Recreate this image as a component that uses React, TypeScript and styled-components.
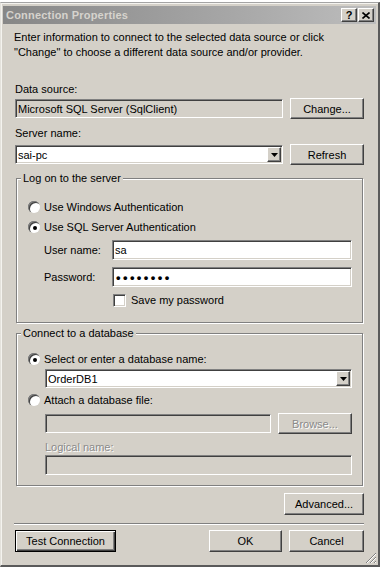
import React from 'react';
import styled, { createGlobalStyle } from 'styled-components';

const GlobalStyle = createGlobalStyle`
  html, body {
    margin: 0;
    padding: 0;
    background: #ffffff;
  }
  body {
    font-family: 'Liberation Sans', Arial, sans-serif;
    font-size: 11px;
    color: #000000;
  }
  * {
    box-sizing: border-box;
  }
`;

// window frame
const Window = styled.div`
  position: relative;
  width: 380px;
  height: 565px;
  margin-top: 2px;
  display: flex;
  flex-direction: column;
  background: #d4d0c8;
  border-top: 1px solid #a4a4a4;
  border-left: 1px solid #e4e2dc;
  border-right: 2px solid #5a5a5a;
  border-bottom: 2px solid #5a5a5a;
  box-shadow: inset 1px 1px 0 #f4f3ef;
`;

const TitleBar = styled.div`
  height: 18px;
  margin: 3px 2px 0 2px;
  padding: 0 2px 0 3px;
  display: flex;
  align-items: center;
  background: linear-gradient(90deg, #878787 0%, #a6a6a6 60%, #bdbdbd 100%);
`;

const TitleText = styled.span`
  flex: 1;
  font-weight: bold;
  font-size: 11px;
  color: #d6d3cd;
  letter-spacing: 0.2px;
`;

const CaptionButton = styled.div<{ $gap?: number }>`
  width: 16px;
  height: 14px;
  margin-left: ${(p) => p.$gap ?? 0}px;
  display: flex;
  align-items: center;
  justify-content: center;
  background: #d4d0c8;
  border: 1px solid;
  border-color: #ffffff #404040 #404040 #ffffff;
  box-shadow: inset -1px -1px 0 #808080;
  font-weight: bold;
  font-size: 11px;
  line-height: 12px;
`;

const Body = styled.div`
  flex: 1;
  display: flex;
  flex-direction: column;
  padding: 6px 14px 0 14px;
`;

const Intro = styled.p`
  margin: 0 0 0 -1px;
  line-height: 15px;
`;

const FieldLabel = styled.div<{ $top: number; $indent?: number; $disabled?: boolean }>`
  margin-top: ${(p) => p.$top}px;
  margin-left: ${(p) => p.$indent ?? 0}px;
  line-height: 14px;
  height: 14px;
  color: ${(p) => (p.$disabled ? '#8a8a8a' : '#000000')};
  text-shadow: ${(p) => (p.$disabled ? '1px 1px 0 #ffffff' : 'none')};
`;

const Row = styled.div<{ $top: number; $indent?: number; $height?: number }>`
  margin-top: ${(p) => p.$top}px;
  margin-left: ${(p) => p.$indent ?? 0}px;
  height: ${(p) => p.$height ?? 21}px;
  display: flex;
  align-items: center;
  gap: 7px;
`;

const TextBox = styled.div<{ $height?: number; $bg?: string }>`
  flex: 1;
  height: ${(p) => p.$height ?? 19}px;
  display: flex;
  align-items: center;
  padding: 0 1px 0 2px;
  background: ${(p) => p.$bg ?? '#ffffff'};
  border: 1px solid;
  border-color: #808080 #ffffff #ffffff #808080;
  box-shadow: inset 1px 1px 0 #404040, inset -1px -1px 0 #d4d0c8;
  white-space: nowrap;
  overflow: hidden;
`;

const BoxText = styled.span`
  flex: 1;
`;

const PasswordDots = styled.span`
  flex: 1;
  font-size: 13px;
  font-weight: bold;
  letter-spacing: 2.4px;
  margin-left: 1px;
`;

const DropButton = styled.div`
  width: 14px;
  height: 15px;
  display: flex;
  align-items: center;
  justify-content: center;
  background: #d4d0c8;
  border: 1px solid;
  border-color: #ffffff #404040 #404040 #ffffff;
  box-shadow: inset -1px -1px 0 #808080;
`;

const Button = styled.div<{ $width: number; $height?: number; $primary?: boolean; $disabled?: boolean }>`
  width: ${(p) => p.$width}px;
  height: ${(p) => p.$height ?? 22}px;
  flex: none;
  display: flex;
  align-items: center;
  justify-content: center;
  background: #d4d0c8;
  border: 1px solid;
  border-color: ${(p) => (p.$primary ? '#000000' : '#ffffff #404040 #404040 #ffffff')};
  box-shadow: ${(p) =>
    p.$primary
      ? 'inset 1px 1px 0 #ffffff, inset -1px -1px 0 #404040, inset -2px -2px 0 #808080'
      : 'inset -1px -1px 0 #808080'};
  color: ${(p) => (p.$disabled ? '#8a8a8a' : '#000000')};
  text-shadow: ${(p) => (p.$disabled ? '1px 1px 0 #ffffff' : 'none')};
`;

const Group = styled.fieldset<{ $top: number }>`
  margin: ${(p) => p.$top}px 1px 0 1px;
  padding: 0;
  min-width: 0;
  border: 1px solid #808080;
  box-shadow: inset 1px 1px 0 #ffffff, 1px 1px 0 #ffffff;
`;

const Legend = styled.legend`
  margin-left: 4px;
  padding: 0 2px;
  line-height: 14px;
  background: #d4d0c8;
`;

const GroupBody = styled.div<{ $bottom: number }>`
  display: flex;
  flex-direction: column;
  padding: 0 10px ${(p) => p.$bottom}px 11px;
`;

const OptionRow = styled.div<{ $top: number; $indent?: number }>`
  margin-top: ${(p) => p.$top}px;
  margin-left: ${(p) => p.$indent ?? 0}px;
  height: 14px;
  display: flex;
  align-items: center;
  gap: 4px;
`;

const RadioCircle = styled.span<{ $checked?: boolean }>`
  width: 12px;
  height: 12px;
  flex: none;
  display: flex;
  align-items: center;
  justify-content: center;
  border-radius: 50%;
  background: #ffffff;
  box-shadow: inset 1px 1px 0 #808080, inset 2px 2px 0 #404040;

  &::after {
    content: '';
    width: 4px;
    height: 4px;
    border-radius: 50%;
    background: #000000;
    display: ${(p) => (p.$checked ? 'block' : 'none')};
    margin: 1px 0 0 1px;
  }
`;

const CheckBox = styled.span`
  width: 13px;
  height: 13px;
  flex: none;
  margin-right: 1px;
  background: #ffffff;
  border: 1px solid;
  border-color: #808080 #ffffff #ffffff #808080;
  box-shadow: inset 1px 1px 0 #404040, inset -1px -1px 0 #d4d0c8;
`;

const CredLabel = styled.span`
  width: 61px;
  flex: none;
`;

const Separator = styled.div`
  margin: 8px 0 0 -1px;
  height: 2px;
  border-top: 1px solid #808080;
  border-bottom: 1px solid #ffffff;
`;

const ButtonRow = styled.div<{ $top: number; $end?: boolean }>`
  margin-top: ${(p) => p.$top}px;
  display: flex;
  align-items: center;
  justify-content: ${(p) => (p.$end ? 'flex-end' : 'flex-start')};
  gap: 7px;
`;

const Spacer = styled.div`
  flex: 1;
`;

const Grip = styled.svg`
  position: absolute;
  right: 1px;
  bottom: 1px;
`;

const ComboBox = ({ value }: { value: string }) => (
  <TextBox>
    <BoxText>{value}</BoxText>
    <DropButton>
      <svg width="7" height="4" viewBox="0 0 7 4">
        <polygon points="0,0 7,0 3.5,4" fill="#000" />
      </svg>
    </DropButton>
  </TextBox>
);

const App = () => {
  return (
    <>
      <GlobalStyle />
      <Window>
        <TitleBar>
          <TitleText>Connection Properties</TitleText>
          <CaptionButton>?</CaptionButton>
          <CaptionButton $gap={1}>
            <svg width="8" height="7" viewBox="0 0 8 7">
              <path d="M0.5 0.5 L7.5 6.5 M7.5 0.5 L0.5 6.5" stroke="#000" strokeWidth="1.6" />
            </svg>
          </CaptionButton>
        </TitleBar>

        <Body>
          <Intro>
            Enter information to connect to the selected data source or click
            <br />
            "Change" to choose a different data source and/or provider.
          </Intro>

          <FieldLabel $top={22}>Data source:</FieldLabel>
          <Row $top={2}>
            <TextBox $bg="#d4d0c8">
              <BoxText>Microsoft SQL Server (SqlClient)</BoxText>
            </TextBox>
            <Button $width={74} $height={21}>Change...</Button>
          </Row>

          <FieldLabel $top={7}>Server name:</FieldLabel>
          <Row $top={4}>
            <ComboBox value="sai-pc" />
            <Button $width={74} $height={21}>Refresh</Button>
          </Row>

          <Group $top={6}>
            <Legend>Log on to the server</Legend>
            <GroupBody $bottom={15}>
              <OptionRow $top={15}>
                <RadioCircle />
                <span>Use Windows Authentication</span>
              </OptionRow>
              <OptionRow $top={6}>
                <RadioCircle $checked />
                <span>Use SQL Server Authentication</span>
              </OptionRow>
              <Row $top={6} $indent={16} $height={20}>
                <CredLabel>User name:</CredLabel>
                <TextBox $height={20}>
                  <BoxText>sa</BoxText>
                </TextBox>
              </Row>
              <Row $top={7} $indent={16} $height={20}>
                <CredLabel>Password:</CredLabel>
                <TextBox $height={20}>
                  <PasswordDots>••••••••</PasswordDots>
                </TextBox>
              </Row>
              <OptionRow $top={6} $indent={85}>
                <CheckBox />
                <span>Save my password</span>
              </OptionRow>
            </GroupBody>
          </Group>

          <Group $top={3}>
            <Legend>Connect to a database</Legend>
            <GroupBody $bottom={10}>
              <OptionRow $top={12}>
                <RadioCircle $checked />
                <span>Select or enter a database name:</span>
              </OptionRow>
              <Row $top={3} $indent={17} $height={19}>
                <ComboBox value="OrderDB1" />
              </Row>
              <OptionRow $top={5}>
                <RadioCircle />
                <span>Attach a database file:</span>
              </OptionRow>
              <Row $top={6} $indent={17}>
                <TextBox $bg="#d4d0c8" />
                <Button $width={74} $height={21} $disabled>Browse...</Button>
              </Row>
              <FieldLabel $top={6} $indent={17} $disabled>Logical name:</FieldLabel>
              <Row $top={1} $indent={17} $height={20}>
                <TextBox $bg="#d4d0c8" $height={20} />
              </Row>
            </GroupBody>
          </Group>

          <ButtonRow $top={7} $end>
            <Button $width={80}>Advanced...</Button>
          </ButtonRow>

          <Separator />

          <ButtonRow $top={5}>
            <Button $width={101} $primary>Test Connection</Button>
            <Spacer />
            <Button $width={73}>OK</Button>
            <Button $width={75}>Cancel</Button>
          </ButtonRow>
        </Body>

        <Grip width="12" height="12" viewBox="0 0 12 12">
          <path d="M11 1 L1 11 M11 5 L5 11 M11 9 L9 11" stroke="#808080" strokeWidth="1" />
          <path d="M11 2 L2 11 M11 6 L6 11 M11 10 L10 11" stroke="#ffffff" strokeWidth="1" />
        </Grip>
      </Window>
    </>
  );
};

export default App;
